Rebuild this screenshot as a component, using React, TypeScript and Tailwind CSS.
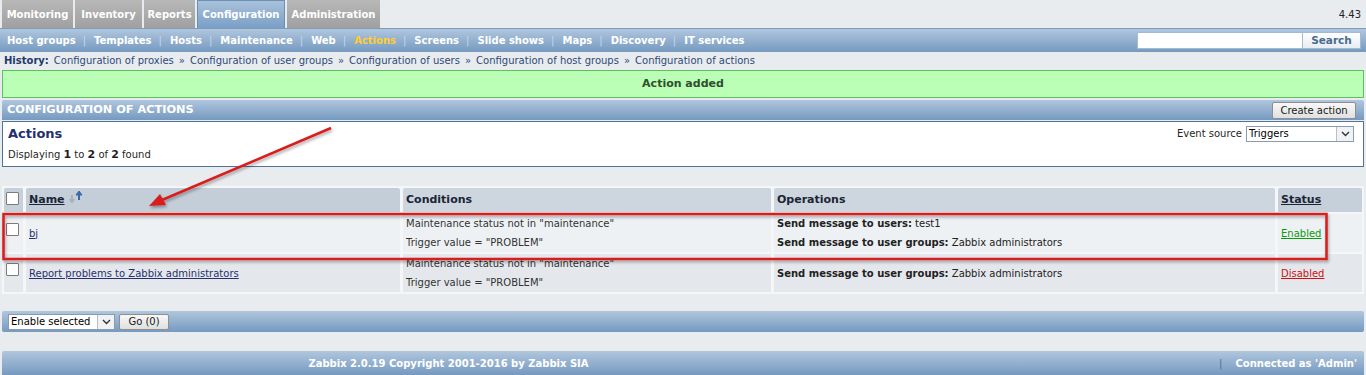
import React from "react";

const blueBar = "bg-linear-to-b from-[#b0c6dd] via-[#93b0cf] to-[#7599c0]";

function Checkbox() {
  return <div className="w-[13px] h-[13px] bg-white border border-[#7c7c7c] rounded-[1px]" />;
}

function Select({ label, width }: { label: string; width: string }) {
  return (
    <div className={`flex h-[16px] bg-white border border-[#8a9bb0] ${width}`}>
      <div className="flex-1 pl-[2px] leading-[14px] text-[10px] text-black">{label}</div>
      <div className="w-[17px] border-l border-[#b6bfc9] bg-[#f0f2f4] flex items-center justify-center">
        <svg width="9" height="6" viewBox="0 0 9 6">
          <path d="M1 1 L4.5 4.5 L8 1" stroke="#333" strokeWidth="1.4" fill="none" />
        </svg>
      </div>
    </div>
  );
}

export default function App() {
  const tabs = [
    { t: "Monitoring", w: "w-[71px]" },
    { t: "Inventory", w: "w-[67px]" },
    { t: "Reports", w: "w-[51px]" },
    { t: "Configuration", w: "w-[88px]", active: true },
    { t: "Administration", w: "w-[93px]" },
  ];
  const nav = ["Host groups", "Templates", "Hosts", "Maintenance", "Web", "Actions", "Screens", "Slide shows", "Maps", "Discovery", "IT services"];
  const history = ["Configuration of proxies", "Configuration of user groups", "Configuration of users", "Configuration of host groups", "Configuration of actions"];

  return (
    <div className="relative w-[1366px] h-[375px] overflow-hidden bg-[#e9ecef] font-['DejaVu_Sans',sans-serif] text-[10px] text-[#1f1f1f]">
      {/* top tabs */}
      <div className="flex h-[28px] items-end pl-[2px]">
        {tabs.map((tab) => (
          <div
            key={tab.t}
            className={`${tab.w} mr-[2px] h-[28px] flex items-center justify-center text-white font-bold text-[10px] ${
              tab.active
                ? "bg-linear-to-b from-[#a9c1da] to-[#7a9fc6] border border-b-0 border-[#6b8fb5]"
                : "bg-linear-to-b from-[#b8b8b8] to-[#a0a0a0]"
            }`}
          >
            {tab.t}
          </div>
        ))}
        <div className="flex-1 h-full flex items-center justify-end pr-[5px] text-[10px] text-[#222]">4.43</div>
      </div>

      {/* sub nav */}
      <div className={`h-[24px] ${blueBar} border-t border-[#7c9bbf] flex items-center pl-0 pr-[5px]`}>
        <div className="flex items-center flex-1 text-[10px] font-bold">
          {nav.map((n, i) => (
            <React.Fragment key={n}>
              {i > 0 && <span className="text-[#c8d7e8] font-normal text-[10px]">|</span>}
              <span className={`${i === 0 ? "pl-[7px] pr-[7px]" : "pl-[8px] pr-[7px]"} ${n === "Actions" ? "text-[#ffcc33]" : "text-white"}`}>{n}</span>
            </React.Fragment>
          ))}
        </div>
        <div className="flex h-[17px]">
          <div className="w-[166px] bg-white border border-[#a5b9cf]" />
          <div className="w-[58px] bg-linear-to-b from-white to-[#e8edf2] border border-l-0 border-[#a5b9cf] flex items-center justify-center text-[10.5px] font-bold text-[#4a6a8e]">
            Search
          </div>
        </div>
      </div>

      {/* history */}
      <div className="h-[17px] flex items-center pl-[4px] text-[10px] text-[#2e4a78]">
        <span className="font-bold text-[#21386a] mr-[5px]">History:</span>
        {history.map((h, i) => (
          <React.Fragment key={h}>
            {i > 0 && <span className="mx-[5px] text-[#2e4a78]">»</span>}
            <span>{h}</span>
          </React.Fragment>
        ))}
      </div>

      {/* message */}
      <div className="mx-[2px] mt-[1px] h-[28px] bg-[#bbffb6] border border-[#5ec05e] flex items-center justify-center text-[11px] font-bold text-[#2f4f2f]">
        Action added
      </div>

      {/* header bar */}
      <div className={`mx-[2px] mt-[2px] h-[20px] ${blueBar} rounded-t-[2px] flex items-center justify-between pl-[5px] pr-[8px]`}>
        <span className="text-white font-bold text-[11.3px]">CONFIGURATION OF ACTIONS</span>
        <div className="h-[17px] w-[84px] bg-linear-to-b from-[#f8f8f8] to-[#e0e0e0] border border-[#8f8f8f] rounded-[2px] flex items-center justify-center text-[10px] text-[#1a1a1a]">
          Create action
        </div>
      </div>

      {/* actions box */}
      <div className="mx-[2px] mt-[1px] h-[46px] bg-white border border-[#4f739b] flex justify-between px-[5px]">
        <div className="flex flex-col">
          <div className="text-[13px] font-bold text-[#1f3070] mt-[3px] leading-[18px]">Actions</div>
          <div className="text-[10px] text-[#1f1f1f] mt-[4px]">
            Displaying <b className="text-[11px]">1</b> to <b className="text-[11px]">2</b> of <b className="text-[11px]">2</b> found
          </div>
        </div>
        <div className="flex items-start mt-[4px] pr-[4px] gap-[4px]">
          <span className="text-[10px] leading-[16px]">Event source</span>
          <Select label="Triggers" width="w-[108px]" />
        </div>
      </div>

      {/* table */}
      <div className="mx-[2px] mt-[19px] bg-[#f4f6f8] p-[2px] grid grid-cols-[19px_374px_368px_501px_1fr] gap-x-[3px] gap-y-[2px]">
        <div className="h-[24px] bg-[#c6d0da] rounded-t-[2px] flex items-start pt-[4px] pl-[2px]"><Checkbox /></div>
        <div className="h-[24px] bg-[#c4ced8] rounded-t-[2px] flex items-center pl-[3px] text-[11px] font-bold text-[#1b2535]">
          <span className="underline">Name</span>
          <svg width="18" height="14" viewBox="0 0 18 14" className="ml-[2px] -mt-[6px]">
            <path d="M5 5 V11" stroke="#a9b1ba" strokeWidth="2" fill="none" />
            <path d="M2.5 9.5 L5 13 L7.5 9.5 Z" fill="#a9b1ba" stroke="#a9b1ba" strokeWidth="1" />
            <path d="M12 10 V4" stroke="#3a68a8" strokeWidth="2" fill="none" />
            <path d="M9 5 L12 1 L15 5 Z" stroke="#3a68a8" strokeWidth="1" fill="#3a68a8" />
          </svg>
        </div>
        <div className="h-[24px] bg-[#cdd5de] rounded-t-[2px] flex items-center pl-[3px] text-[11px] font-bold text-[#1b2535]">Conditions</div>
        <div className="h-[24px] bg-[#cdd5de] rounded-t-[2px] flex items-center pl-[3px] text-[11px] font-bold text-[#1b2535]">Operations</div>
        <div className="h-[24px] bg-[#c6d0da] rounded-t-[2px] flex items-center pl-[3px] text-[11px] font-bold text-[#1b2535]"><span className="underline">Status</span></div>

        {/* row 1 */}
        <div className="h-[38px] bg-[#eef1f4] pt-[9px] pl-[2px]"><Checkbox /></div>
        <div className="h-[38px] bg-[#eef1f4] flex items-center pl-[3px] text-[#27306e] underline">bj</div>
        <div className="h-[38px] bg-[#eef1f4] pl-[3px] flex flex-col justify-center gap-[4px] text-[10px] text-[#333]">
          <span>Maintenance status not in "maintenance"</span>
          <span>Trigger value = "PROBLEM"</span>
        </div>
        <div className="h-[38px] bg-[#eef1f4] pl-[3px] flex flex-col justify-center gap-[4px] text-[10px] text-[#222]">
          <span><b>Send message to users:</b> test1</span>
          <span><b>Send message to user groups:</b> Zabbix administrators</span>
        </div>
        <div className="h-[38px] bg-[#eef1f4] flex items-center pl-[3px] text-[#0b9a0b] underline">Enabled</div>

        {/* row 2 */}
        <div className="h-[38px] bg-[#e4e8ec] pt-[9px] pl-[2px]"><Checkbox /></div>
        <div className="h-[38px] bg-[#e4e8ec] flex items-center pl-[3px] text-[#27306e] underline">Report problems to Zabbix administrators</div>
        <div className="h-[38px] bg-[#e4e8ec] pl-[3px] flex flex-col justify-center gap-[4px] text-[10px] text-[#333]">
          <span>Maintenance status not in "maintenance"</span>
          <span>Trigger value = "PROBLEM"</span>
        </div>
        <div className="h-[38px] bg-[#e4e8ec] pl-[3px] flex items-center text-[10px] text-[#222]">
          <span><b>Send message to user groups:</b> Zabbix administrators</span>
        </div>
        <div className="h-[38px] bg-[#e4e8ec] flex items-center pl-[3px] text-[#cc1111] underline">Disabled</div>
      </div>

      {/* bottom action bar */}
      <div className={`mx-[2px] mt-[17px] h-[21px] ${blueBar} rounded-[2px] flex items-center pl-[6px] gap-[4px]`}>
        <Select label="Enable selected" width="w-[107px]" />
        <div className="h-[16px] w-[50px] bg-linear-to-b from-[#f8f8f8] to-[#e0e0e0] border border-[#8f8f8f] rounded-[2px] flex items-center justify-center text-[10px] text-[#1a1a1a]">
          Go (0)
        </div>
      </div>

      {/* footer */}
      <div className={`mx-[2px] mt-[19px] h-[24px] ${blueBar} rounded-t-[2px] flex items-center text-white font-bold text-[10px]`}>
        <div className="w-[893px] text-center">Zabbix 2.0.19 Copyright 2001-2016 by Zabbix SIA</div>
        <div className="flex-1 flex justify-end items-center pr-[7px]">
          <span className="text-[#4e6d92] font-normal mr-[13px]">|</span>
          <span>Connected as 'Admin'</span>
        </div>
      </div>

      {/* annotation overlay */}
      <svg className="absolute left-0 top-0 pointer-events-none" width="1366" height="375">
        <defs>
          <filter id="sh" x="-5%" y="-20%" width="110%" height="150%">
            <feDropShadow dx="1" dy="2" stdDeviation="1.5" floodColor="#000" floodOpacity="0.35" />
          </filter>
        </defs>
        <g filter="url(#sh)">
          <rect x="3.5" y="214" width="1323" height="45" fill="none" stroke="#d91e1e" strokeWidth="2.5" />
          <line x1="331" y1="128" x2="162" y2="200" stroke="#d91e1e" strokeWidth="2.5" />
          <path d="M149 206 L160 194 L166 205 Z" fill="#d91e1e" />
        </g>
      </svg>
    </div>
  );
}
